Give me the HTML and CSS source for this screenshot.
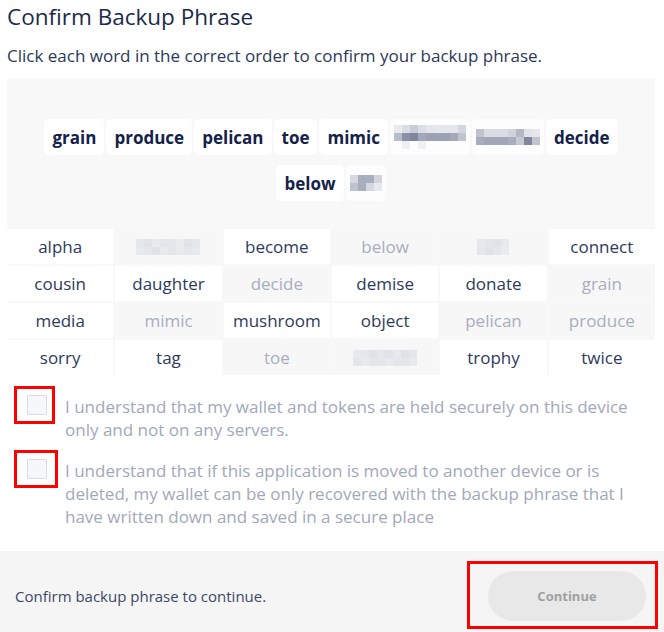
FILE: index.html
```html
<!DOCTYPE html>
<html>
<head>
<meta charset="utf-8">
<link rel="stylesheet" href="styles.css">
</head>
<body>
<div class="page">
  <h1 class="title">Confirm Backup Phrase</h1>
  <p class="subtitle">Click each word in the correct order to confirm your backup phrase.</p>
  <div class="board">
    <div class="picked">
      <span class="chip">grain</span>
      <span class="chip">produce</span>
      <span class="chip">pelican</span>
      <span class="chip">toe</span>
      <span class="chip">mimic</span>
      <span class="chip chip-blur">
        <svg width="72" height="24" viewBox="0 0 72 24">
          <rect x="0" y="0" width="8" height="8" fill="#e9eaee"/><rect x="8" y="0" width="8" height="8" fill="#dcdee5"/><rect x="16" y="0" width="8" height="8" fill="#c9ccd6"/><rect x="24" y="0" width="8" height="8" fill="#dcdee5"/><rect x="32" y="0" width="8" height="8" fill="#e4e5ea"/><rect x="40" y="0" width="8" height="8" fill="#e6e7ec"/><rect x="48" y="0" width="8" height="8" fill="#e6e7ec"/><rect x="56" y="0" width="8" height="8" fill="#e6e7ec"/><rect x="64" y="0" width="8" height="8" fill="#d3d6de"/>
          <rect x="0" y="8" width="8" height="8" fill="#b8bccb"/><rect x="8" y="8" width="8" height="8" fill="#8a90a6"/><rect x="16" y="8" width="8" height="8" fill="#7f869d"/><rect x="24" y="8" width="8" height="8" fill="#a3a8ba"/><rect x="32" y="8" width="8" height="8" fill="#9ca1b5"/><rect x="40" y="8" width="8" height="8" fill="#9ca1b5"/><rect x="48" y="8" width="8" height="8" fill="#9ca1b5"/><rect x="56" y="8" width="8" height="8" fill="#a3a8ba"/><rect x="64" y="8" width="8" height="8" fill="#c0c4cf"/>
          <rect x="8" y="16" width="8" height="8" fill="#eef0f3"/><rect x="24" y="16" width="8" height="8" fill="#eef0f3"/>
        </svg>
      </span>
      <span class="chip chip-blur">
        <svg width="64" height="16" viewBox="0 0 64 16">
          <rect x="0" y="0" width="8" height="8" fill="#c0c3cf"/><rect x="8" y="0" width="8" height="8" fill="#dadce3"/><rect x="16" y="0" width="8" height="8" fill="#dadce3"/><rect x="24" y="0" width="8" height="8" fill="#dadce3"/><rect x="32" y="0" width="8" height="8" fill="#d0d3db"/><rect x="40" y="0" width="8" height="8" fill="#b3b7c6"/><rect x="48" y="0" width="8" height="8" fill="#e0e2e8"/><rect x="56" y="0" width="8" height="8" fill="#e6e7ec"/>
          <rect x="0" y="8" width="8" height="8" fill="#a8adbe"/><rect x="8" y="8" width="8" height="8" fill="#a0a5b8"/><rect x="16" y="8" width="8" height="8" fill="#a0a5b8"/><rect x="24" y="8" width="8" height="8" fill="#a0a5b8"/><rect x="32" y="8" width="8" height="8" fill="#a8adbe"/><rect x="40" y="8" width="8" height="8" fill="#c6c9d4"/><rect x="48" y="8" width="8" height="8" fill="#7f869d"/><rect x="56" y="8" width="8" height="8" fill="#c0c4cf"/>
        </svg>
      </span>
      <span class="chip">decide</span>
      <span class="chip">below</span>
      <span class="chip chip-blur">
        <svg width="32" height="16" viewBox="0 0 32 16">
          <rect x="0" y="0" width="8" height="8" fill="#d5d8e0"/><rect x="8" y="0" width="8" height="8" fill="#a9aebe"/><rect x="16" y="0" width="8" height="8" fill="#a9aebe"/><rect x="24" y="0" width="8" height="8" fill="#d2d5dd"/>
          <rect x="0" y="8" width="8" height="8" fill="#bfc3cf"/><rect x="8" y="8" width="8" height="8" fill="#a9aebe"/><rect x="16" y="8" width="8" height="8" fill="#d5d8e0"/><rect x="24" y="8" width="8" height="8" fill="#e8e9ee"/>
        </svg>
      </span>
    </div>
    <div class="grid">
      <div class="cell">alpha</div>
      <div class="cell used">
        <svg width="64" height="16" viewBox="0 0 64 16">
          <rect x="0" y="0" width="8" height="8" fill="#e5e6eb"/><rect x="8" y="0" width="8" height="8" fill="#e0e2e7"/><rect x="16" y="0" width="8" height="8" fill="#e8e9ed"/><rect x="24" y="0" width="8" height="8" fill="#e3e5ea"/><rect x="32" y="0" width="8" height="8" fill="#e5e6eb"/><rect x="40" y="0" width="8" height="8" fill="#ebecf0"/><rect x="48" y="0" width="8" height="8" fill="#e0e2e7"/><rect x="56" y="0" width="8" height="8" fill="#e5e6eb"/>
          <rect x="0" y="8" width="8" height="8" fill="#e8e9ed"/><rect x="8" y="8" width="8" height="8" fill="#e5e6eb"/><rect x="16" y="8" width="8" height="8" fill="#e0e2e7"/><rect x="24" y="8" width="8" height="8" fill="#e8e9ed"/><rect x="32" y="8" width="8" height="8" fill="#e3e5ea"/><rect x="40" y="8" width="8" height="8" fill="#e8e9ed"/><rect x="48" y="8" width="8" height="8" fill="#e5e6eb"/><rect x="56" y="8" width="8" height="8" fill="#e8e9ed"/>
        </svg>
      </div>
      <div class="cell">become</div>
      <div class="cell used">below</div>
      <div class="cell used">
        <svg width="32" height="16" viewBox="0 0 32 16">
          <rect x="0" y="0" width="8" height="8" fill="#e8e9ed"/><rect x="8" y="0" width="8" height="8" fill="#e3e5ea"/><rect x="16" y="0" width="8" height="8" fill="#e0e2e7"/><rect x="24" y="0" width="8" height="8" fill="#e8e9ed"/>
          <rect x="0" y="8" width="8" height="8" fill="#e5e6eb"/><rect x="8" y="8" width="8" height="8" fill="#e0e2e7"/><rect x="16" y="8" width="8" height="8" fill="#e5e6eb"/><rect x="24" y="8" width="8" height="8" fill="#ebecf0"/>
        </svg>
      </div>
      <div class="cell">connect</div>

      <div class="cell">cousin</div>
      <div class="cell">daughter</div>
      <div class="cell used">decide</div>
      <div class="cell">demise</div>
      <div class="cell">donate</div>
      <div class="cell used">grain</div>

      <div class="cell">media</div>
      <div class="cell used">mimic</div>
      <div class="cell">mushroom</div>
      <div class="cell">object</div>
      <div class="cell used">pelican</div>
      <div class="cell used">produce</div>

      <div class="cell">sorry</div>
      <div class="cell">tag</div>
      <div class="cell used">toe</div>
      <div class="cell used">
        <svg width="64" height="16" viewBox="0 0 64 16">
          <rect x="0" y="0" width="8" height="8" fill="#e8e9ed"/><rect x="8" y="0" width="8" height="8" fill="#e5e6eb"/><rect x="16" y="0" width="8" height="8" fill="#e0e2e7"/><rect x="24" y="0" width="8" height="8" fill="#e5e6eb"/><rect x="32" y="0" width="8" height="8" fill="#e0e2e7"/><rect x="40" y="0" width="8" height="8" fill="#e8e9ed"/><rect x="48" y="0" width="8" height="8" fill="#dfe1e6"/><rect x="56" y="0" width="8" height="8" fill="#e5e6eb"/>
          <rect x="0" y="8" width="8" height="8" fill="#e3e5ea"/><rect x="8" y="8" width="8" height="8" fill="#e8e9ed"/><rect x="16" y="8" width="8" height="8" fill="#e5e6eb"/><rect x="24" y="8" width="8" height="8" fill="#e3e5ea"/><rect x="32" y="8" width="8" height="8" fill="#e8e9ed"/><rect x="40" y="8" width="8" height="8" fill="#e5e6eb"/><rect x="48" y="8" width="8" height="8" fill="#e3e5ea"/><rect x="56" y="8" width="8" height="8" fill="#e8e9ed"/>
        </svg>
      </div>
      <div class="cell">trophy</div>
      <div class="cell">twice</div>
    </div>
  </div>

  <div class="checks">
    <label class="check">
      <span class="mark"><span class="box"></span></span>
      <span class="check-text">I understand that my wallet and tokens are held securely on this device only and not on any servers.</span>
    </label>
    <label class="check">
      <span class="mark mark-wide"><span class="box"></span></span>
      <span class="check-text">I understand that if this application is moved to another device or is deleted, my wallet can be only recovered with the backup phrase that I have written down and saved in a secure place</span>
    </label>
  </div>
</div>

<div class="footer">
  <span class="footer-text">Confirm backup phrase to continue.</span>
  <span class="btn-frame"><button class="btn" disabled>Continue</button></span>
</div>
</body>
</html>
```

FILE: styles.css
```css
* { box-sizing: border-box; }

html, body {
  margin: 0;
  padding: 0;
  background: #ffffff;
}

body {
  font-family: "Open Sans", "Liberation Sans", sans-serif;
  color: #1f2d4d;
  width: 664px;
  height: 632px;
  overflow: hidden;
  display: flex;
  flex-direction: column;
}

.page {
  padding: 0 9px 0 7px;
  flex: 1;
}

.title {
  margin: 0;
  padding-top: 3px;
  font-size: 22.5px;
  line-height: 28px;
  font-weight: 400;
  color: #1c2a4a;
}

.subtitle {
  margin: 13px 0 0;
  font-size: 17px;
  line-height: 24px;
  color: #2b3859;
}

.board {
  margin-top: 10px;
  background: #f8f8f9;
}

.picked {
  display: flex;
  flex-wrap: wrap;
  justify-content: center;
  gap: 10px 2px;
  padding: 41px 20px 28px;
}

.chip {
  height: 36px;
  display: flex;
  align-items: center;
  padding: 0 8px;
  background: #ffffff;
  border-radius: 5px;
  font-size: 17px;
  font-weight: 700;
  color: #14214a;
}

.chip-blur {
  padding: 0 4px;
  background: #fdfdfd;
}

.chip-blur svg { display: block; }

.grid {
  display: grid;
  grid-template-columns: repeat(6, 1fr);
  gap: 2px;
}

.cell {
  height: 35px;
  display: flex;
  align-items: center;
  justify-content: center;
  background: #ffffff;
  font-size: 17px;
  color: #2d3a5c;
}

.cell.used {
  background: #f7f7f8;
  color: #a8aebf;
}

.checks {
  margin-top: 11px;
  display: flex;
  flex-direction: column;
  gap: 9px;
}

.check {
  display: flex;
  align-items: flex-start;
}

.mark {
  margin-left: 7px;
  width: 41px;
  height: 38px;
  border: 3px solid #ff0000;
  padding: 6px 0 0 10px;
  flex: none;
}

.mark-wide { width: 44px; }

.box {
  display: block;
  width: 20px;
  height: 20px;
  background: #f5f7fb;
  border: 1px solid #d9dce4;
  border-radius: 1px;
}

.check-text {
  margin-left: 10px;
  max-width: 575px;
  padding-top: 9px;
  font-size: 17px;
  line-height: 23px;
  color: #a2a8bb;
}

.mark-wide + .check-text { margin-left: 7px; }

.footer {
  height: 81px;
  background: #f5f5f5;
  display: flex;
  align-items: flex-start;
  justify-content: space-between;
  padding: 10px 6px 0 15px;
}

.footer-text {
  margin-top: 25px;
  font-size: 15px;
  line-height: 20px;
  color: #3b4869;
}

.btn-frame {
  display: block;
  width: 191px;
  height: 68px;
  border: 3px solid #ff0000;
  padding: 7px 9px 0 18px;
}

.btn {
  display: block;
  width: 158px;
  height: 50px;
  border: none;
  border-radius: 25px;
  background: #e8e8e8;
  font-family: inherit;
  font-size: 13px;
  font-weight: 700;
  color: #a0a0a0;
}
```
